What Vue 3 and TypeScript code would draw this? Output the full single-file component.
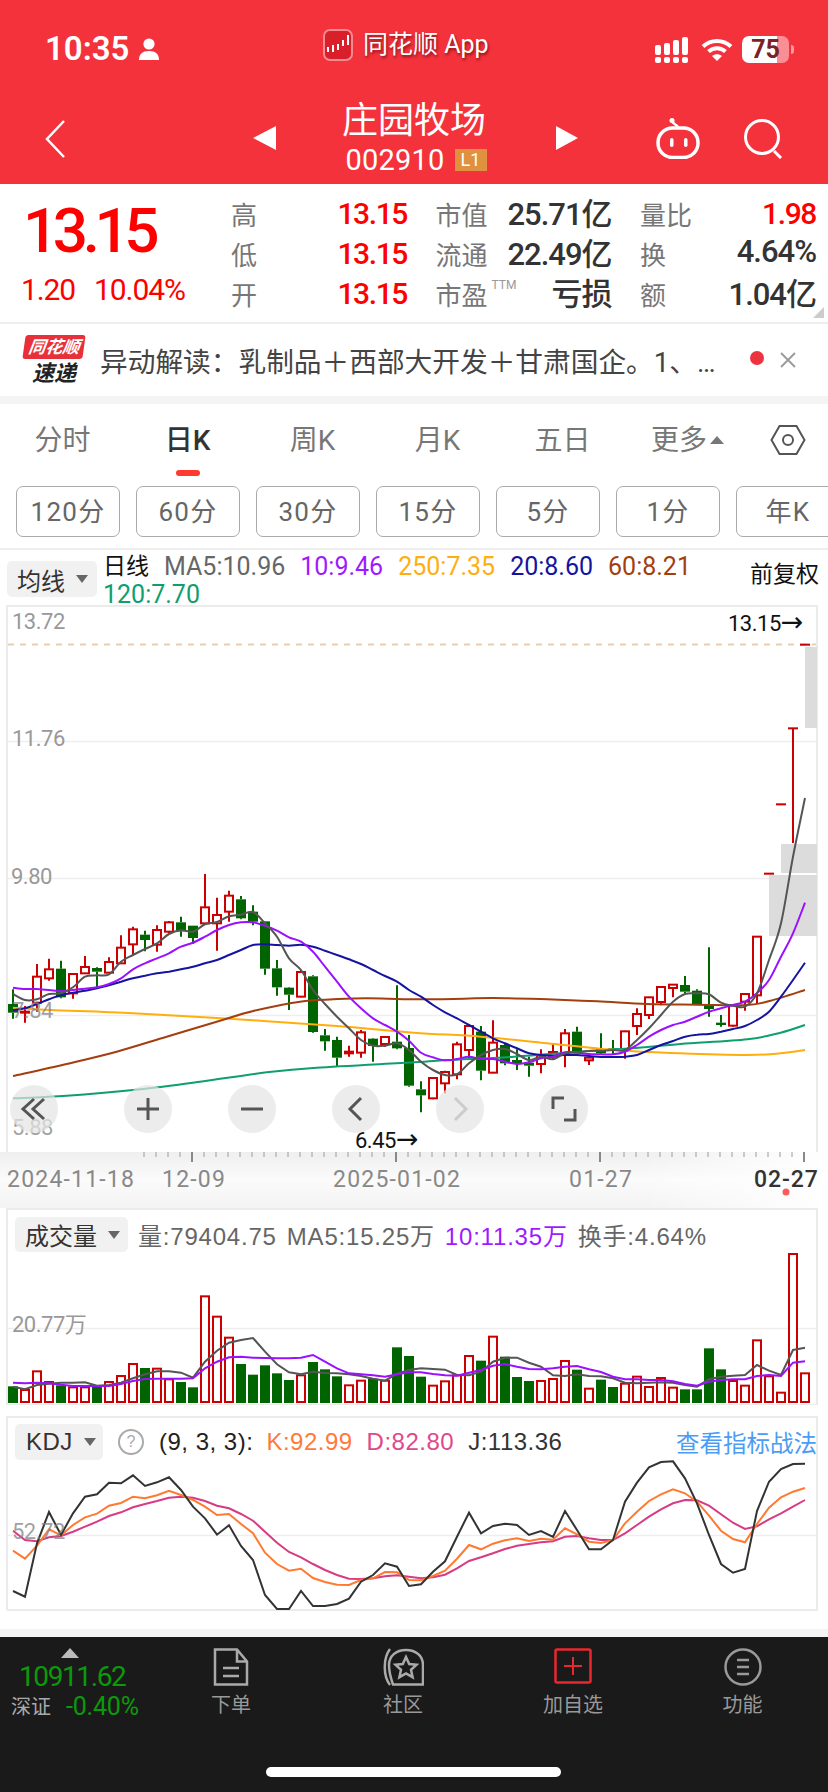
<template>
  <div class="page">
    <!-- 顶部红色区域 -->
    <header class="top">
      <div class="status">
        <div class="status-left">
          <span class="clock">10:35</span>
          <svg class="person" width="22" height="22" viewBox="0 0 22 22" fill="#fff">
            <circle cx="11" cy="6" r="5.6" />
            <path d="M1 22c0-6 3.500-9 10-9s10 3 10 9z" />
          </svg>
        </div>
        <div class="status-app">
          <svg width="30" height="32" viewBox="0 0 30 32">
            <rect x="1" y="1" width="28" height="30" rx="6" fill="#d81f2a" stroke="#f58b90" stroke-width="2" />
            <g fill="#fff">
              <rect x="4" y="18" width="2" height="5" />
              <rect x="9" y="16" width="2" height="7" />
              <rect x="14" y="15" width="2" height="6" />
              <rect x="19" y="11" width="2" height="6" />
              <rect x="24" y="6" width="2" height="10" />
            </g>
          </svg>
          <span class="app-name">同花顺 App</span>
        </div>
        <div class="status-right">
          <svg width="34" height="26" viewBox="0 0 34 26" fill="#fff">
            <rect x="0" y="8" width="6" height="10" rx="2" />
            <rect x="9" y="6" width="6" height="12" rx="2" />
            <rect x="18" y="3" width="6" height="15" rx="2" />
            <rect x="27" y="0" width="6" height="18" rx="2" />
            <rect x="0" y="20" width="6" height="6" rx="2" />
            <rect x="9" y="20" width="6" height="6" rx="2" />
            <rect x="18" y="20" width="6" height="6" rx="2" />
            <rect x="27" y="20" width="6" height="6" rx="2" />
          </svg>
          <svg width="32" height="24" viewBox="0 0 32 24" fill="none" stroke="#fff" stroke-width="4">
            <path d="M2 8.500C10 1 22 1 30 8.500" />
            <path d="M7.500 13.500c5-4.500 12-4.500 17 0" />
            <path d="M16 23l-5-5c3-2.500 7-2.500 10 0z" fill="#fff" stroke="none" />
          </svg>
          <div class="battery">
            <div class="battery-body"><span>75</span></div>
            <i class="battery-tip"></i>
          </div>
        </div>
      </div>
      <div class="title-bar">
        <svg class="back" width="20" height="38" viewBox="0 0 20 38" fill="none" stroke="#fff" stroke-width="2.500">
          <path d="M19 1L2 19l17 18" />
        </svg>
        <i class="tri-left"></i>
        <div class="stock">
          <div class="stock-name">庄园牧场</div>
          <div class="stock-code">
            <span>002910</span>
            <em>L1</em>
          </div>
        </div>
        <i class="tri-right"></i>
        <svg class="robot" width="46" height="42" viewBox="0 0 46 42" fill="none" stroke="#fff" stroke-width="3.500">
          <circle cx="17" cy="3.500" r="2.500" fill="#fff" stroke="none" />
          <path d="M17 4c1 3 4 3 6 6" stroke-width="2.500" />
          <rect x="3" y="11" width="40" height="29.500" rx="14.500" />
          <rect x="15" y="21" width="3.500" height="9" rx="1.700" fill="#fff" stroke="none" />
          <rect x="29" y="21" width="3.500" height="9" rx="1.700" fill="#fff" stroke="none" />
        </svg>
        <svg class="search" width="40" height="40" viewBox="0 0 40 40" fill="none" stroke="#fff" stroke-width="3">
          <circle cx="18" cy="18" r="16.500" />
          <path d="M30 32l7 7" />
        </svg>
      </div>
    </header>

    <!-- 行情 -->
    <section class="quote">
      <div class="quote-price">
        <div class="price">13.15</div>
        <div class="change">
          <span>1.20</span>
          <span>10.04%</span>
        </div>
      </div>
      <div class="quote-grid">
        <div v-for="cell in quoteCells" :key="cell.label" class="cell">
          <span class="cell-label">{{ cell.label }}<sup v-if="cell.sup">{{ cell.sup }}</sup></span>
          <span class="cell-value" :class="{ red: cell.red }">{{ cell.value }}</span>
        </div>
      </div>
      <i class="corner"></i>
    </section>

    <!-- 速递 -->
    <section class="news">
      <div class="news-logo">
        <div class="news-logo-top">同花顺</div>
        <div class="news-logo-bottom">速递</div>
      </div>
      <div class="news-text">异动解读：乳制品＋西部大开发＋甘肃国企。1、…</div>
      <i class="news-dot"></i>
      <svg width="16" height="16" viewBox="0 0 16 16" stroke="#999" stroke-width="1.800">
        <path d="M1 1l14 14M15 1L1 15" />
      </svg>
    </section>

    <!-- 周期 -->
    <nav class="tabs">
      <div v-for="tab in tabs" :key="tab" class="tab" :class="{ active: tab === '日K' }">
        {{ tab }}
        <i v-if="tab === '更多'" class="more-arrow"></i>
      </div>
      <svg class="hex" width="36" height="32" viewBox="0 0 36 32" fill="none" stroke="#555" stroke-width="2">
        <path d="M1.500 16L9.500 2h17l8 14-8 14h-17z" />
        <circle cx="18" cy="16" r="5" />
      </svg>
    </nav>
    <div class="pills">
      <div v-for="pill in pills" :key="pill" class="pill">{{ pill }}</div>
    </div>

    <!-- 均线图例 -->
    <div class="legend">
      <div class="select legend-select">均线<i></i></div>
      <div class="legend-items">
        <span class="legend-day">日线</span>
        <span v-for="item in maLegend" :key="item.text" :style="{ color: item.color }">{{ item.text }}</span>
      </div>
      <span class="legend-adjust">前复权</span>
    </div>

    <!-- K线 -->
    <div class="kline">
      <svg width="828" height="603" viewBox="0 605 828 603">
        <defs>
          <linearGradient id="axisBg" x1="0" y1="0" x2="0" y2="1">
            <stop offset="0" stop-color="#efefef" />
            <stop offset="0.5" stop-color="#fbfbfb" />
            <stop offset="1" stop-color="#f3f3f3" />
          </linearGradient>
          <linearGradient id="axisFade" x1="0" y1="0" x2="1" y2="0">
            <stop offset="0" stop-color="#fff" stop-opacity="0" />
            <stop offset="1" stop-color="#fff" />
          </linearGradient>
        </defs>
        <rect x="0" y="1152" width="828" height="56" fill="url(#axisBg)" />
        <rect x="640" y="1152" width="188" height="56" fill="url(#axisFade)" />
        <path d="M7 1152V606H817V1152" fill="none" stroke="#ebebeb" stroke-width="2" />
        <path d="M8 741.500H816M8 878.500H816M8 1015.500H816" stroke="#eeeeee" stroke-width="1.500" />
        <path d="M8 644.500H816" stroke="#e8cfae" stroke-width="2" stroke-dasharray="6 6" />

        <g fill="#dcdcdc">
          <rect x="805" y="647" width="12" height="81" />
          <rect x="781" y="844" width="36" height="29" />
          <rect x="769" y="875" width="48" height="61" />
        </g>

        <g v-for="c in candles" :key="c.x">
          <path :d="c.wick" :stroke="c.color" stroke-width="2" fill="none" />
          <rect v-if="c.up" :x="c.x - 4" :y="c.top" width="8" :height="c.height" fill="#fff" stroke="#cc0000" stroke-width="2" />
          <rect v-else :x="c.x - 5" :y="c.top" width="10" :height="c.height" fill="#006400" />
        </g>

        <path v-for="line in maLines" :key="line.color" :d="line.d" :stroke="line.color" stroke-width="2" fill="none" />

        <text class="axis-num" x="12" y="629">13.72</text>
        <text class="axis-num" x="12" y="746">11.76</text>
        <text class="axis-num" x="11" y="884">9.80</text>
        <text class="axis-num faded" x="12" y="1018">7.84</text>
        <text class="axis-num faded" x="12" y="1135">5.88</text>
        <text class="mark" x="728" y="631">13.15<tspan class="arrow">→</tspan></text>
        <text class="mark" x="355" y="1148">6.45<tspan class="arrow">→</tspan></text>

        <path v-for="t in ticks" :key="t.x" :d="t.d" :stroke="t.major ? '#888' : '#aaa'" :stroke-width="t.major ? 2 : 1.200" />
        <text class="date" x="7" y="1187">2024-11-18</text>
        <text class="date" x="162" y="1187">12-09</text>
        <text class="date" x="333" y="1187">2025-01-02</text>
        <text class="date" x="569" y="1187">01-27</text>
        <text class="date last" x="754" y="1187">02-27</text>
        <circle cx="786" cy="1192" r="3.500" fill="#ff5a5a" />
      </svg>
      <div class="kline-tools">
        <div v-for="tool in tools" :key="tool.name" class="tool">
          <svg width="48" height="48" viewBox="0 0 48 48" fill="none" :stroke="tool.stroke" stroke-width="3">
            <path :d="tool.d" />
          </svg>
        </div>
      </div>
    </div>

    <!-- 成交量 -->
    <section class="panel volume">
      <svg width="828" height="197" viewBox="0 1208 828 197">
        <path d="M7 1405V1209H817V1405H7" fill="none" stroke="#ebebeb" stroke-width="2" />
        <path d="M8 1328.500H816" stroke="#eeeeee" stroke-width="1.500" />
        <text class="axis-num" x="12" y="1332">20.77万</text>
        <g v-for="b in volBars" :key="b.x">
          <rect v-if="b.up" :x="b.x - 4" :y="b.top" width="8" :height="b.height" fill="#fff" stroke="#cc0000" stroke-width="2" />
          <rect v-else :x="b.x - 5" :y="b.top" width="10" :height="b.height + 1" fill="#006400" />
        </g>
        <polyline :points="volMa5" stroke="#555" stroke-width="2" fill="none" />
        <polyline :points="volMa10" stroke="#9b10ff" stroke-width="2" fill="none" />
      </svg>
      <div class="panel-head">
        <div class="select vol-select">成交量<i></i></div>
        <span class="gray">量:79404.75</span>
        <span class="gray">MA5:15.25万</span>
        <span class="purple">10:11.35万</span>
        <span class="gray">换手:4.64%</span>
      </div>
    </section>

    <!-- KDJ -->
    <section class="panel kdj">
      <svg width="828" height="196" viewBox="0 1416 828 196">
        <path d="M7 1610V1417H817V1610H7" fill="none" stroke="#ebebeb" stroke-width="2" />
        <path d="M8 1535.500H816" stroke="#eeeeee" stroke-width="1.500" />
        <polyline :points="kdjD" stroke="#d83a84" stroke-width="2" fill="none" />
        <polyline :points="kdjK" stroke="#ff7a30" stroke-width="2" fill="none" />
        <polyline :points="kdjJ" stroke="#333" stroke-width="2" fill="none" />
        <text class="axis-num faded" x="12" y="1539">52.72</text>
      </svg>
      <div class="panel-head">
        <div class="select kdj-select">KDJ<i></i></div>
        <span class="help">?</span>
        <span class="params">(9, 3, 3):</span>
        <span class="k">K:92.99</span>
        <span class="d">D:82.80</span>
        <span class="j">J:113.36</span>
        <span class="link">查看指标战法</span>
      </div>
    </section>
    <div class="spacer"></div>

    <!-- 底部导航 -->
    <footer class="bottom">
      <div class="bottom-row">
        <div class="index">
          <i class="index-arrow"></i>
          <div class="index-value">10911.62</div>
          <div class="index-sub"><span>深证</span><b>-0.40%</b></div>
        </div>
        <div class="action">
          <svg width="36" height="38" viewBox="0 0 36 38" fill="none" stroke="#aaa" stroke-width="2.500">
            <path d="M2 1.500h22l10 12v23H2zM24 1.500v12h10" />
            <path d="M10 20h16M10 28h16" />
          </svg>
          <span>下单</span>
        </div>
        <div class="action">
          <svg width="42" height="38" viewBox="0 0 42 38" fill="none" stroke="#aaa" stroke-width="2.500">
            <path d="M8 1C1 10 1 28 8 37" />
            <path d="M11 36.500C8 28 7 24 7 17C7 8 14 2 24 2s17 6 17 15v19.500z" />
            <path d="M24 9l3.200 7 7.300.800-5.500 5 1.600 7.400-6.600-3.800-6.600 3.800 1.600-7.400-5.500-5 7.300-.800z" />
          </svg>
          <span>社区</span>
        </div>
        <div class="action">
          <svg width="38" height="36" viewBox="0 0 38 36" fill="none" stroke="#e8282e" stroke-width="2.500">
            <rect x="1.500" y="1.500" width="35" height="33" rx="1.500" />
            <path d="M10 18h18M19 9v18" stroke-width="2" />
          </svg>
          <span>加自选</span>
        </div>
        <div class="action">
          <svg width="38" height="38" viewBox="0 0 38 38" fill="none" stroke="#999" stroke-width="2.500">
            <ellipse cx="19" cy="19" rx="17.500" ry="17.500" />
            <path d="M13 12h12M13 19h12M13 26h12" />
          </svg>
          <span>功能</span>
        </div>
      </div>
      <div class="home-bar"></div>
    </footer>
  </div>
</template>

<script setup lang="ts">
interface QuoteCell {
  label: string;
  value: string;
  red?: boolean;
  sup?: string;
}

const quoteCells: QuoteCell[] = [
  { label: "高", value: "13.15", red: true },
  { label: "市值", value: "25.71亿" },
  { label: "量比", value: "1.98", red: true },
  { label: "低", value: "13.15", red: true },
  { label: "流通", value: "22.49亿" },
  { label: "换", value: "4.64%" },
  { label: "开", value: "13.15", red: true },
  { label: "市盈", value: "亏损", sup: "TTM" },
  { label: "额", value: "1.04亿" },
];

const tabs = ["分时", "日K", "周K", "月K", "五日", "更多"];
const pills = ["120分", "60分", "30分", "15分", "5分", "1分", "年K"];

const maLegend = [
  { text: "MA5:10.96", color: "#666" },
  { text: "10:9.46", color: "#a01aff" },
  { text: "250:7.35", color: "#ffae0f" },
  { text: "20:8.60", color: "#1414a0" },
  { text: "60:8.21", color: "#a33e0f" },
  { text: "120:7.70", color: "#0f9e6e" },
];

// 数据按截图读取: y 以 1/3 像素记, 基准 880
const rawCandles: [number, number, number, number, number][] = [
  [328, 372, 398, 416, 0], [378, 395, 398, 428, 1], [252, 290, 368, 395, 1], [236, 268, 295, 302, 1],
  [242, 266, 352, 355, 0], [280, 282, 340, 356, 1], [228, 261, 280, 282, 1], [262, 264, 275, 325, 0],
  [232, 246, 278, 280, 1], [166, 203, 250, 252, 1], [140, 148, 193, 224, 1], [152, 164, 180, 214, 0],
  [136, 150, 194, 215, 1], [123, 127, 155, 160, 1], [110, 127, 154, 170, 0], [137, 137, 174, 192, 0],
  [-18, 82, 130, 135, 1], [53, 105, 130, 212, 1], [32, 47, 95, 125, 1], [48, 58, 115, 118, 0],
  [76, 95, 125, 136, 0], [124, 124, 266, 284, 0], [240, 265, 322, 347, 0], [322, 323, 344, 390, 0],
  [270, 276, 350, 352, 1], [286, 289, 456, 458, 0], [447, 466, 484, 512, 0], [470, 480, 533, 558, 0],
  [497, 515, 520, 530, 1], [450, 457, 518, 533, 1], [475, 476, 498, 545, 0], [470, 471, 492, 500, 1],
  [316, 485, 505, 508, 0], [465, 504, 617, 620, 0], [604, 628, 646, 697, 0], [593, 594, 655, 658, 1],
  [572, 576, 610, 640, 1], [485, 493, 583, 598, 1], [432, 438, 510, 535, 1], [438, 455, 572, 601, 0],
  [421, 488, 578, 580, 1], [490, 495, 550, 556, 0], [508, 540, 550, 570, 0], [530, 548, 557, 590, 0],
  [508, 525, 552, 580, 1], [490, 516, 530, 540, 1], [447, 460, 520, 562, 1], [440, 455, 515, 520, 0],
  [520, 533, 541, 555, 1], [460, 508, 520, 522, 0], [480, 505, 510, 525, 0], [452, 454, 508, 536, 1],
  [385, 402, 438, 465, 1], [350, 352, 405, 417, 1], [320, 321, 366, 376, 1], [313, 314, 324, 352, 1],
  [288, 315, 335, 340, 0], [328, 332, 372, 374, 0], [202, 373, 387, 410, 0], [405, 428, 435, 440, 0],
  [375, 376, 437, 440, 1], [340, 342, 365, 392, 1], [170, 170, 346, 372, 1], [-19, -19, -19, -19, 1],
  [-227, -227, -227, -227, 1], [-455, -455, -455, -111, 1], [-706, -706, -706, -706, 1],
];

const slotX = (i: number) => 13 + 12 * i;
const toY = (v: number, base: number) => base + v / 3;

const candles = rawCandles.map(([hi, top, bot, lo, up], i) => {
  const x = slotX(i);
  return {
    x,
    up: up === 1,
    color: up === 1 ? "#cc0000" : "#006400",
    top: toY(top, 880),
    // 高度为 0 的 rect 不会绘制
    height: Math.max((bot - top) / 3, 0.01),
    wick: `M${x} ${toY(hi, 880)}V${toY(top, 880)}M${x} ${toY(bot, 880)}V${toY(lo, 880)}`,
  };
});

type Pt = [number, number];

// Catmull-Rom 平滑
const smooth = (pts: Pt[]) => {
  let d = `M${pts[0][0]} ${pts[0][1]}`;
  for (let i = 0; i < pts.length - 1; i++) {
    const p0 = pts[Math.max(i - 1, 0)];
    const p1 = pts[i];
    const p2 = pts[i + 1];
    const p3 = pts[Math.min(i + 2, pts.length - 1)];
    const c1x = p1[0] + (p2[0] - p0[0]) / 6;
    const c1y = p1[1] + (p2[1] - p0[1]) / 6;
    const c2x = p2[0] - (p3[0] - p1[0]) / 6;
    const c2y = p2[1] - (p3[1] - p1[1]) / 6;
    d += `C${c1x.toFixed(1)} ${c1y.toFixed(1)} ${c2x.toFixed(1)} ${c2y.toFixed(1)} ${p2[0]} ${p2[1].toFixed(1)}`;
  }
  return d;
};

const bySlot = (vals: number[], base: number): Pt[] => vals.map((v, i) => [slotX(i), toY(v, base)]);
const byFree = (left: Pt[], right: Pt[]): Pt[] => [
  ...left.map(([x, y]): Pt => [x / 3, toY(y, 880)]),
  ...right.map(([x, y]): Pt => [414 + x / 3, toY(y, 880)]),
];

const ma5 = [342, 360, 358, 342, 340, 322, 290, 286, 283, 245, 225, 207, 190, 162, 151, 155, 133, 126, 109, 104, 96, 130, 170, 235, 270, 330, 372, 410, 445, 480, 497, 497, 490, 510, 545, 570, 585, 583, 550, 525, 510, 507, 522, 540, 530, 538, 520, 517, 513, 512, 510, 510, 480, 445, 405, 365, 342, 340, 343, 368, 377, 380, 340, 240, 130, -70, -246];
const ma10 = [323, 327, 327, 330, 334, 330, 326, 322, 312, 295, 268, 250, 235, 220, 200, 188, 170, 150, 135, 127, 127, 137, 152, 172, 185, 215, 260, 305, 350, 385, 415, 435, 455, 482, 518, 532, 541, 537, 530, 537, 537, 545, 552, 547, 535, 530, 517, 518, 522, 523, 523, 515, 495, 470, 450, 435, 425, 410, 395, 385, 375, 365, 340, 300, 230, 160, 68];
const ma20 = [390, 385, 372, 358, 345, 338, 332, 325, 316, 305, 295, 287, 280, 275, 268, 260, 250, 240, 225, 210, 195, 193, 195, 197, 194, 200, 212, 225, 238, 252, 270, 288, 305, 330, 350, 375, 397, 415, 435, 455, 475, 490, 505, 520, 525, 527, 525, 525, 528, 531, 531, 530, 525, 510, 495, 483, 470, 464, 462, 455, 447, 438, 420, 395, 350, 300, 248];
const ma250 = byFree(
  [[39, 383], [150, 390], [400, 400], [700, 417], [1000, 437]],
  [[0, 458], [200, 470], [400, 490], [600, 510], [800, 520], [1000, 525], [1100, 520], [1173, 510]],
);
const ma60 = byFree(
  [[39, 588], [200, 552], [350, 515], [500, 470], [650, 425], [760, 393], [900, 365], [1000, 358], [1100, 355]],
  [[0, 358], [150, 356], [240, 354], [400, 358], [550, 364], [700, 372], [850, 374], [1000, 375], [1070, 362], [1173, 330]],
);
const ma120 = byFree(
  [[39, 655], [200, 647], [400, 630], [600, 605], [800, 577], [950, 563]],
  [[0, 547], [100, 540], [300, 530], [500, 515], [650, 505], [800, 492], [1000, 478], [1100, 458], [1173, 435]],
);

const maLines = [
  { color: "#0f9e6e", d: smooth(ma120) },
  { color: "#ffae0f", d: smooth(ma250) },
  { color: "#a33e0f", d: smooth(ma60) },
  { color: "#1414a0", d: smooth(bySlot(ma20, 880)) },
  { color: "#9b10ff", d: smooth(bySlot(ma10, 880)) },
  { color: "#555555", d: smooth(bySlot(ma5, 880)) },
];

const ticks = Array.from({ length: 56 }, (_, i) => {
  const x = 144 + 12 * i;
  const major = (x - 192) % 204 === 0;
  return { x, major, d: `M${x} 1152V${major ? 1162 : 1157}` };
});

const tools = [
  { name: "first", stroke: "#555", d: "M24 14L13 24l11 10M34 14L23 24l11 10" },
  { name: "plus", stroke: "#555", d: "M13 24h22M24 13v22" },
  { name: "minus", stroke: "#555", d: "M13 24h22" },
  { name: "prev", stroke: "#555", d: "M29 13L18 24l11 11" },
  { name: "next", stroke: "#ccc", d: "M19 13l11 11-11 11" },
  { name: "full", stroke: "#555", d: "M13 24V13h11M35 24v11H24" },
];

// 成交量
const volTops = [589, 600, 544, 576, 586, 592, 592, 588, 576, 558, 522, 534, 536, 568, 576, 592, 319, 380, 443, 522, 554, 526, 550, 570, 556, 516, 538, 559, 586, 572, 566, 572, 472, 498, 560, 587, 574, 556, 498, 512, 440, 500, 561, 573, 573, 567, 513, 539, 596, 569, 591, 581, 560, 591, 564, 593, 598, 598, 475, 538, 573, 587, 451, 559, 608, 192, 550];
const volBars = volTops.map((v, i) => ({
  x: slotX(i),
  up: rawCandles[i][4] === 1,
  top: toY(v, 1190),
  height: (636 - v) / 3,
}));

const toPoints = (vals: number[], base: number) =>
  vals.map((v, i) => `${slotX(i)},${toY(v, base).toFixed(1)}`).join(" ");

const volMa5 = toPoints([590, 598, 585, 581, 578, 578, 577, 587, 585, 578, 565, 553, 544, 544, 548, 563, 515, 482, 458, 450, 444, 485, 523, 547, 553, 545, 549, 550, 553, 558, 566, 572, 551, 540, 535, 537, 539, 555, 556, 545, 515, 503, 503, 518, 530, 556, 558, 553, 558, 559, 565, 578, 580, 578, 577, 578, 585, 590, 568, 560, 557, 555, 525, 542, 555, 480, 473], 1190);
const volMa10 = toPoints([578, 580, 578, 580, 584, 588, 588, 588, 588, 582, 573, 567, 566, 566, 566, 565, 535, 515, 502, 500, 503, 504, 505, 505, 503, 495, 515, 535, 550, 553, 556, 560, 553, 547, 547, 552, 556, 557, 548, 540, 527, 522, 530, 537, 538, 535, 530, 528, 538, 546, 560, 568, 568, 570, 570, 574, 582, 587, 575, 570, 568, 568, 558, 555, 558, 518, 514], 1190);

// KDJ
const kdjJ = toPoints([573, 590, 430, 336, 405, 340, 290, 283, 248, 250, 226, 258, 247, 232, 270, 320, 355, 404, 376, 438, 480, 585, 627, 627, 573, 618, 618, 612, 596, 545, 525, 490, 500, 558, 553, 515, 484, 410, 338, 400, 378, 371, 375, 405, 393, 411, 333, 390, 448, 448, 420, 305, 248, 202, 186, 184, 235, 310, 405, 492, 518, 507, 333, 245, 207, 192, 191], 1400);
const kdjK = toPoints([452, 476, 437, 388, 406, 375, 352, 341, 317, 309, 290, 295, 286, 272, 285, 300, 320, 345, 342, 372, 400, 458, 492, 512, 506, 534, 546, 554, 555, 540, 535, 516, 517, 540, 541, 528, 512, 476, 435, 448, 431, 421, 415, 423, 416, 419, 385, 403, 425, 429, 420, 370, 335, 303, 283, 268, 280, 305, 347, 392, 417, 427, 372, 323, 292, 275, 264], 1400);
const kdjD = toPoints([392, 420, 424, 412, 408, 395, 380, 365, 348, 337, 322, 312, 303, 293, 290, 293, 303, 317, 325, 342, 362, 395, 428, 456, 472, 492, 510, 525, 536, 537, 535, 529, 526, 530, 535, 532, 524, 505, 483, 472, 460, 447, 437, 432, 427, 424, 410, 408, 415, 420, 420, 400, 375, 350, 328, 310, 300, 301, 317, 343, 368, 387, 379, 358, 340, 320, 300], 1400);
</script>

<style>
html,
body {
  margin: 0;
  background: #fff;
}
</style>

<style scoped>
.page {
  width: 828px;
  height: 1792px;
  overflow: hidden;
  font-family: Roboto, "Noto Sans CJK SC", sans-serif;
  background: #fff;
}

i,
em {
  font-style: normal;
}

/* 顶部 */
.top {
  height: 184px;
  background: #f4323c;
  color: #fff;
}

.status {
  height: 70px;
  display: flex;
  align-items: flex-start;
}

.status-left {
  width: 323px;
  padding: 33px 0 0 45px;
  box-sizing: border-box;
  display: flex;
  align-items: center;
  gap: 9px;
}

.clock {
  font-size: 33px;
  font-weight: 600;
  line-height: 32px;
}

.status-app {
  width: 332px;
  padding-top: 29px;
  display: flex;
  align-items: center;
  gap: 10px;
}

.app-name {
  font-size: 25px;
  line-height: 32px;
  text-shadow: 1px 2px 3px rgba(90, 0, 0, 0.7);
}

.status-right {
  padding-top: 36px;
  display: flex;
  align-items: center;
  gap: 12px;
}

.battery {
  display: flex;
  align-items: center;
  gap: 2px;
  margin-left: -3px;
}

.battery-body {
  width: 47px;
  height: 27px;
  border-radius: 7px;
  background: linear-gradient(90deg, #fff 75%, rgba(255, 255, 255, 0.45) 75%);
  font-size: 25px;
  font-weight: 700;
  line-height: 27px;
  color: #7a2226;
  text-align: center;
}

.battery-tip {
  width: 3px;
  height: 9px;
  border-radius: 0 3px 3px 0;
  background: rgba(255, 255, 255, 0.5);
}

.title-bar {
  height: 114px;
  display: flex;
  align-items: flex-start;
}

.back {
  margin: 50px 0 0 45px;
}

.tri-left,
.tri-right {
  width: 0;
  height: 0;
  margin-top: 56px;
  border-top: 12.5px solid transparent;
  border-bottom: 12.5px solid transparent;
}

.tri-left {
  margin-left: 188px;
  border-right: 23px solid #fff;
}

.tri-right {
  border-left: 22px solid #fff;
}

.stock {
  width: 280px;
  text-align: center;
}

.stock-name {
  font-size: 36px;
  line-height: 40px;
  margin: 31px 0 0 -4px;
}

.stock-code {
  margin-top: 7px;
  display: flex;
  justify-content: center;
  align-items: center;
  gap: 10px;
  font-size: 29px;
  line-height: 24px;
  letter-spacing: 0.2px;
}

.stock-code em {
  width: 32px;
  height: 22px;
  background: #e0913f;
  font-size: 18px;
  line-height: 22px;
  letter-spacing: 0;
}

.robot {
  margin: 47px 0 0 77px;
}

.search {
  margin: 49px 0 0 43px;
}

/* 行情 */
.quote {
  position: relative;
  height: 140px;
  display: flex;
  border-bottom: 2px solid #eee;
  box-sizing: border-box;
}

.quote-price {
  width: 231px;
  color: #ff0000;
}

.price {
  margin: 22px 0 0 23px;
  font-size: 62px;
  line-height: 50px;
  font-weight: 500;
  letter-spacing: -5.4px;
}

.change {
  margin: 19px 0 0 21px;
  display: flex;
  gap: 19px;
  font-size: 30px;
  line-height: 30px;
  letter-spacing: -1.1px;
}

.quote-grid {
  margin-top: 10px;
  display: grid;
  grid-template-columns: repeat(3, 176px);
  grid-auto-rows: 40px;
  column-gap: 28.5px;
}

.cell {
  display: flex;
  justify-content: space-between;
  align-items: center;
}

.cell-label {
  font-size: 26px;
  color: #777;
  margin-bottom: 1px;
}

.cell-label sup {
  font-size: 12px;
  line-height: 12px;
  margin-left: 4px;
  vertical-align: 16px;
  color: #999;
}

.cell-value {
  margin-bottom: 5px;
  font-size: 31px;
  font-weight: 500;
  letter-spacing: -1px;
  color: #333;
}

.cell-value.red {
  margin-bottom: 2px;
  font-size: 30px;
  letter-spacing: -1.4px;
  color: #ff0000;
}

.corner {
  position: absolute;
  right: 4px;
  bottom: 4px;
  width: 11px;
  height: 11px;
  background: #ccc;
  clip-path: polygon(100% 0, 100% 100%, 0 100%);
}

/* 速递 */
.news {
  height: 72px;
  display: flex;
  align-items: center;
  border-bottom: 8px solid #f4f4f4;
}

.news-logo {
  margin-left: 24px;
  width: 60px;
  font-style: italic;
  font-weight: 700;
  text-align: center;
}

.news-logo-top {
  height: 24px;
  line-height: 24px;
  font-size: 17px;
  color: #fff;
  background: #e8303a;
  border-radius: 3px;
  transform: skewX(-8deg);
}

.news-logo-bottom {
  margin-top: 4px;
  font-size: 22px;
  line-height: 22px;
  color: #222;
}

.news-text {
  flex: 0 0 617px;
  margin-left: 16px;
  white-space: nowrap;
  font-size: 27.7px;
  color: #444;
}

.news-dot {
  flex: none;
  width: 14px;
  height: 14px;
  margin: -4px 0 0 33px;
  border-radius: 50%;
  background: #ee3340;
}

.news svg {
  margin: 0 0 0 16px;
}

/* 周期 */
.tabs {
  position: relative;
  height: 82px;
  display: flex;
}

.tab {
  position: relative;
  width: 125px;
  height: 72px;
  line-height: 74px;
  text-align: center;
  font-size: 28px;
  color: #777;
}

.tab.active {
  color: #333;
  font-weight: 500;
}

.tab.active::after {
  content: "";
  position: absolute;
  left: 50%;
  bottom: 0;
  width: 24px;
  height: 6px;
  margin-left: -12px;
  border-radius: 3px;
  background: #ff3b30;
}

.more-arrow {
  display: inline-block;
  width: 0;
  height: 0;
  margin: 0 0 6px -4px;
  vertical-align: middle;
  border-left: 7px solid transparent;
  border-right: 7px solid transparent;
  border-bottom: 8px solid #777;
}

.hex {
  position: absolute;
  left: 770px;
  top: 20px;
}

.pills {
  height: 62px;
  padding-left: 16px;
  display: flex;
  gap: 16px;
  overflow: hidden;
  border-bottom: 2px solid #eee;
}

.pill {
  flex: 0 0 104px;
  height: 51px;
  box-sizing: border-box;
  border: 1px solid #aaa;
  border-radius: 7px;
  text-align: center;
  line-height: 50px;
  font-size: 26px;
  letter-spacing: 1.3px;
  color: #666;
}

/* 图例 */
.legend {
  height: 55px;
  display: flex;
  align-items: flex-start;
  font-size: 25px;
}

.select {
  box-sizing: border-box;
  display: flex;
  align-items: center;
  background: #f1f1f1;
  border-radius: 5px;
  color: #333;
}

.select i {
  width: 0;
  height: 0;
  margin-left: 11px;
  border-left: 6.5px solid transparent;
  border-right: 6.5px solid transparent;
  border-top: 8px solid #666;
}

.legend-select {
  width: 90px;
  height: 36px;
  margin: 11px 0 0 7px;
  padding-left: 10px;
  font-size: 24px;
}

.legend-items {
  width: 640px;
  margin: 3px 0 0 6px;
  display: flex;
  flex-wrap: wrap;
  column-gap: 15px;
  line-height: 28px;
}

.legend-day {
  color: #111;
  font-size: 23px;
}

.legend-adjust {
  margin: 5px 0 0 7px;
  font-size: 23px;
  color: #111;
  white-space: nowrap;
}

/* K线 */
.kline {
  position: relative;
  height: 603px;
}

.kline svg {
  display: block;
}

.axis-num {
  font-family: Roboto, "Noto Sans CJK SC", sans-serif;
  font-size: 22px;
  fill: #999;
  letter-spacing: -0.5px;
}

.axis-num.faded {
  fill: rgba(130, 130, 130, 0.75);
}

.mark {
  font-family: Roboto, sans-serif;
  font-size: 22px;
  fill: #111;
  letter-spacing: -0.5px;
}

.arrow {
  font-family: "DejaVu Sans", sans-serif;
  font-size: 27px;
}

.date {
  font-family: Roboto, sans-serif;
  font-size: 23px;
  fill: #888;
  letter-spacing: 1.2px;
}

.date.last {
  fill: #333;
  font-weight: 500;
  letter-spacing: 0.9px;
}

.kline-tools {
  position: absolute;
  left: 10px;
  top: 480px;
  display: flex;
  gap: 56px;
}

.tool {
  width: 48px;
  height: 48px;
  border-radius: 50%;
  background: rgba(228, 228, 228, 0.7);
}

.tool:first-child {
  margin-right: 10px;
}

/* 副图 */
.panel {
  position: relative;
}

.panel svg {
  display: block;
}

.panel-head {
  position: absolute;
  left: 15px;
  right: 11px;
  display: flex;
  align-items: center;
  white-space: nowrap;
  font-family: "Liberation Sans", "Noto Sans CJK SC", sans-serif;
  font-size: 24px;
  letter-spacing: 0.5px;
}

.volume {
  height: 197px;
}

.volume .panel-head {
  top: 9px;
  gap: 10px;
  letter-spacing: 0.8px;
}

.vol-select {
  width: 113px;
  height: 35px;
  padding-left: 10px;
  letter-spacing: 0;
}

.gray {
  color: #666;
}

.purple {
  color: #a01aff;
}

.kdj {
  margin-top: 11px;
  height: 196px;
}

.kdj .panel-head {
  top: 8px;
}

.kdj-select {
  width: 88px;
  height: 36px;
  padding-left: 11px;
}

.help {
  width: 22px;
  height: 22px;
  margin-left: 15px;
  border: 2px solid #aaa;
  border-radius: 50%;
  text-align: center;
  line-height: 22px;
  font-size: 16px;
  color: #aaa;
  letter-spacing: 0;
}

.params {
  margin-left: 15px;
  color: #222;
}

.k {
  margin-left: 13px;
  color: #ff7a3a;
}

.d {
  margin-left: 14px;
  color: #e0488a;
}

.j {
  margin-left: 14px;
  color: #333;
}

.link {
  margin-left: auto;
  color: #4a9cf5;
  font-size: 23.5px;
  letter-spacing: 0;
}

.spacer {
  height: 17px;
  border-bottom: 8px solid #f4f4f4;
}

/* 底部 */
.bottom {
  height: 156px;
  background: #1a1a1a;
  color: #999;
  position: relative;
}

.bottom-row {
  display: grid;
  grid-template-columns: 145px 172px 172px 168px 171px;
}

.index {
  position: relative;
  height: 90px;
}

.index-arrow {
  position: absolute;
  left: 61px;
  top: 11px;
  width: 0;
  height: 0;
  border-left: 9px solid transparent;
  border-right: 9px solid transparent;
  border-bottom: 10px solid #bbb;
}

.index-value {
  padding: 24px 0 0 19px;
  font-size: 28px;
  line-height: 32px;
  letter-spacing: -1.4px;
  color: #0a9a0a;
}

.index-sub {
  margin-top: 0;
  padding-left: 11px;
  display: flex;
  gap: 15px;
  align-items: center;
  font-size: 20px;
  line-height: 28px;
  color: #aaa;
}

.index-sub b {
  font-size: 25px;
  font-weight: 400;
  letter-spacing: -0.2px;
  color: #0a9a0a;
}

.action {
  padding-top: 11px;
  height: 71px;
  display: flex;
  flex-direction: column;
  align-items: center;
  justify-content: space-between;
  font-size: 20px;
  line-height: 28px;
}

.home-bar {
  position: absolute;
  left: 266px;
  top: 130px;
  width: 295px;
  height: 10px;
  border-radius: 5px;
  background: #fff;
}
</style>
